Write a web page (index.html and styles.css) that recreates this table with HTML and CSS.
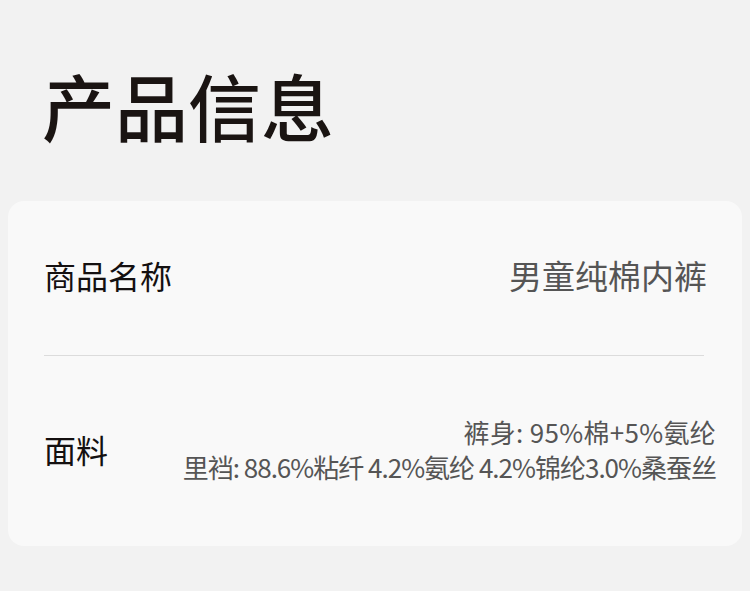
FILE: index.html
```html
<!DOCTYPE html>
<html lang="zh-CN">
<head>
<meta charset="utf-8">
<link rel="stylesheet" href="styles.css">
</head>
<body>
<h1 class="title">产品信息</h1>
<div class="card">
  <div class="row row-name">
    <span class="label">商品名称</span>
    <span class="value value-name">男童纯棉内裤</span>
  </div>
  <div class="divider"></div>
  <div class="row row-fabric">
    <span class="label">面料</span>
    <div class="value value-fabric">
      <div class="line line-body">裤身: 95%棉+5%氨纶</div>
      <div class="line line-lining">里裆: 88.6%粘纤 4.2%氨纶 4.2%锦纶3.0%桑蚕丝</div>
    </div>
  </div>
</div>
</body>
</html>
```
FILE: styles.css
```css
html, body {
  margin: 0;
  padding: 0;
}
body {
  background: #f2f2f2;
  font-family: "Noto Sans CJK SC", "Noto Sans", sans-serif;
  width: 750px;
  height: 591px;
  overflow: hidden;
}
.title {
  margin: 0;
  padding: 59px 0 0 42px;
  height: 201px;
  box-sizing: border-box;
  font-size: 73px;
  line-height: 90px;
  font-weight: 500;
  color: #1a1412;
}
.card {
  margin: 0 8px;
  height: 345px;
  background: #f9f9f9;
  border-radius: 16px;
  padding: 0 26px 0 36px;
  box-sizing: border-box;
}
.row {
  display: flex;
  justify-content: space-between;
  align-items: center;
}
.row-name {
  height: 154px;
  padding-bottom: 6px;
  box-sizing: border-box;
}
.label {
  font-size: 32px;
  color: #141010;
  line-height: 1;
}
.value {
  color: #555;
}
.value-name {
  font-size: 33px;
  line-height: 1;
  margin-right: 9px;
}
.divider {
  height: 1px;
  background: #dcdcdc;
  margin-right: 12px;
}
.row-fabric {
  height: 190px;
  padding-bottom: 4px;
  box-sizing: border-box;
}
.value-fabric {
  text-align: right;
  font-size: 26px;
  line-height: 35px;
}
.line-body {
  letter-spacing: 0.3px;
}
.line-lining {
  letter-spacing: -1px;
}
```
